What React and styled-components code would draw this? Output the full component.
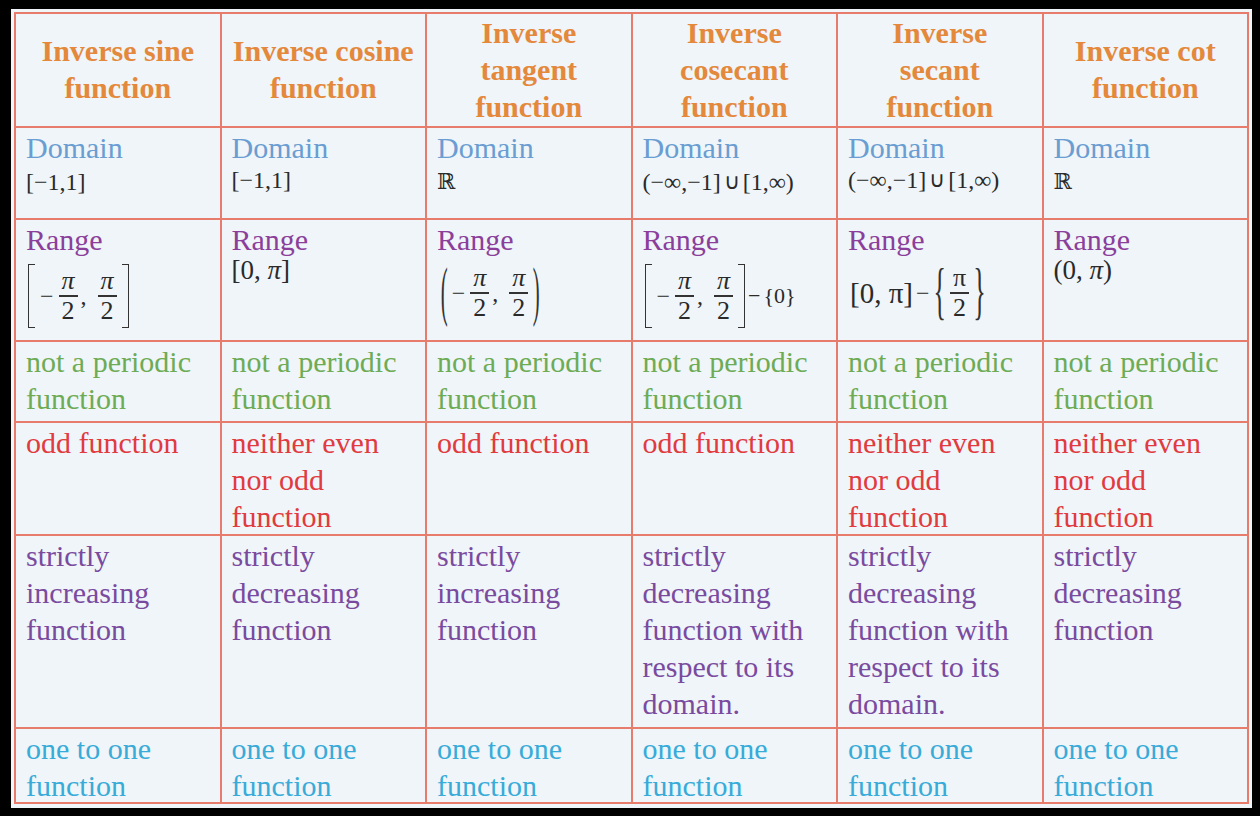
import React from "react";
import styled, { createGlobalStyle } from "styled-components";

const Global = createGlobalStyle`
  html, body { margin: 0; padding: 0; background: #000; }
  body { font-family: "Liberation Serif", "Times New Roman", serif; }
`;

const Frame = styled.div`
  width: 1260px;
  height: 816px;
  background: #000;
  padding: 9px 8px 8px 11px;
  box-sizing: border-box;
`;

const Panel = styled.div`
  width: 100%;
  height: 100%;
  background: #eff5f8;
  padding: 3px 3px 4px 3px;
  box-sizing: border-box;
`;

const Grid = styled.div`
  display: grid;
  grid-template-columns: repeat(6, 1fr);
  grid-template-rows: 114px 92px 122px 81px 113px 193px 75px;
  border-top: 2px solid #e87c6c;
  border-left: 2px solid #e87c6c;
  width: 1235px;
  box-sizing: border-box;
`;

const Cell = styled.div`
  border-right: 2px solid #e87c6c;
  border-bottom: 2px solid #e87c6c;
  padding: 1px 8px 0 10px;
  font-size: 30px;
  line-height: 37px;
  color: ${(p) => p.$color || "#222"};
  overflow: hidden;
`;

const HeadCell = styled(Cell)`
  display: flex;
  align-items: center;
  justify-content: center;
  text-align: center;
  font-weight: bold;
  color: #e4883c;
  padding: 0 6px 2px;
`;

const Line = styled.div`
  white-space: nowrap;
`;

const MathLine = styled.div`
  display: flex;
  align-items: center;
  font-size: 24px;
  line-height: 28px;
  color: #2a2a2a;
  white-space: nowrap;
  margin-top: ${(p) => p.$mt || 0}px;
  margin-left: ${(p) => p.$ml || 0}px;
`;

const Sym = styled.span`
  font-size: ${(p) => p.$size || 24}px;
  font-style: ${(p) => (p.$italic ? "italic" : "normal")};
  margin: 0 ${(p) => p.$mr ?? p.$mx ?? 0}px 0 ${(p) => p.$mx || 0}px;
  font-family: ${(p) => (p.$dj ? '"DejaVu Serif", serif' : "inherit")};
`;

const Bracket = styled.span`
  display: inline-block;
  width: 7px;
  height: ${(p) => p.$h || 60}px;
  border: 1.6px solid #333;
  ${(p) => (p.$side === "l" ? "border-right: none;" : "border-left: none;")}
  margin: ${(p) => (p.$side === "l" ? "0 3px 0 0" : "0 0 0 2px")};
  box-sizing: border-box;
`;

const Tall = styled.span`
  display: inline-block;
  font-size: 26px;
  line-height: 26px;
  transform: scale(${(p) => p.$sx || 1}, ${(p) => p.$sy || 2.3});
  margin: 0 ${(p) => p.$mx || 1}px;
  color: #333;
`;

const FracBox = styled.span`
  display: inline-flex;
  flex-direction: column;
  align-items: center;
  margin: 0 3px;
`;

const FracPart = styled.span`
  font-size: 26px;
  line-height: 28px;
  font-style: ${(p) => (p.$italic ? "italic" : "normal")};
  padding: 0 3px;
`;

const FracBar = styled.span`
  align-self: stretch;
  height: 1.5px;
  background: #333;
`;

const Frac = ({ italic = true }) => (
  <FracBox>
    <FracPart $italic={italic}>π</FracPart>
    <FracBar />
    <FracPart>2</FracPart>
  </FracBox>
);

const C = {
  domain: "#6a9dd2",
  range: "#8b3f9b",
  green: "#6eab55",
  red: "#e13a3f",
  purple: "#7a4a9f",
  cyan: "#38abd9",
};

const heads = [
  ["Inverse sine", "function"],
  ["Inverse cosine", "function"],
  ["Inverse", "tangent", "function"],
  ["Inverse", "cosecant", "function"],
  ["Inverse", "secant", "function"],
  ["Inverse cot", "function"],
];

const Label = ({ color, children }) => <Line style={{ color }}>{children}</Line>;

const Union = () => <Sym $mx={3} $size={22}>∪</Sym>;

const domains = [
  <MathLine $mt={2}>[−1,1]</MathLine>,
  <MathLine $mt={0}>[−1,1]</MathLine>,
  <MathLine $mt={2}><Sym $dj $size={22}>ℝ</Sym></MathLine>,
  <MathLine $mt={2}>(−∞,−1]<Union />[1,∞)</MathLine>,
  <MathLine $mt={0}>(−∞,−1]<Union />[1,∞)</MathLine>,
  <MathLine $mt={2}><Sym $dj $size={22}>ℝ</Sym></MathLine>,
];

const PairOfFracs = () => (
  <>
    <Sym $mx={2}>−</Sym>
    <Frac />
    <Sym $mr={8}>,</Sym>
    <Frac />
  </>
);

const ranges = [
  <MathLine $mt={6} $ml={2}>
    <Bracket $side="l" $h={64} />
    <PairOfFracs />
    <Bracket $side="r" $h={64} />
  </MathLine>,
  <MathLine $mt={-2}>
    <Sym $size={27}>[0,&nbsp;</Sym>
    <Sym $size={27} $italic>π</Sym>
    <Sym $size={27}>]</Sym>
  </MathLine>,
  <MathLine $mt={6} $ml={2}>
    <Tall $sx={0.8} $sy={2.5}>(</Tall>
    <PairOfFracs />
    <Tall $sx={0.8} $sy={2.5}>)</Tall>
  </MathLine>,
  <MathLine $mt={6} $ml={2}>
    <Bracket $side="l" $h={64} />
    <PairOfFracs />
    <Bracket $side="r" $h={64} />
    <Sym $size={22} $mx={3}>−</Sym>
    <Sym $size={22}>{"{0}"}</Sym>
  </MathLine>,
  <MathLine $mt={6} $ml={2}>
    <Sym $size={29}>[0,&nbsp;π]</Sym>
    <Sym $mx={3}>−</Sym>
    <Tall $sy={2.4}>{"{"}</Tall>
    <Frac italic={false} />
    <Tall $sy={2.4}>{"}"}</Tall>
  </MathLine>,
  <MathLine $mt={-2}>
    <Sym $size={27}>(0,&nbsp;</Sym>
    <Sym $size={27} $italic>π</Sym>
    <Sym $size={27}>)</Sym>
  </MathLine>,
];

const periodic = Array(6).fill(["not a periodic", "function"]);
const parity = [
  ["odd function"],
  ["neither even", "nor odd", "function"],
  ["odd function"],
  ["odd function"],
  ["neither even", "nor odd", "function"],
  ["neither even", "nor odd", "function"],
];
const mono = [
  ["strictly", "increasing", "function"],
  ["strictly", "decreasing", "function"],
  ["strictly", "increasing", "function"],
  ["strictly", "decreasing", "function with", "respect to its", "domain."],
  ["strictly", "decreasing", "function with", "respect to its", "domain."],
  ["strictly", "decreasing", "function"],
];
const oneToOne = Array(6).fill(["one to one", "function"]);

const TextCell = ({ lines, color }) => (
  <Cell $color={color}>
    {lines.map((l, i) => (
      <Line key={i}>{l}</Line>
    ))}
  </Cell>
);

export default function App() {
  return (
    <>
      <Global />
      <Frame>
        <Panel>
          <Grid>
            {heads.map((h, i) => (
              <HeadCell key={"h" + i}>
                <div>
                  {h.map((l, j) => (
                    <Line key={j}>{l}</Line>
                  ))}
                </div>
              </HeadCell>
            ))}
            {domains.map((d, i) => (
              <Cell key={"d" + i}>
                <Label color={C.domain}>Domain</Label>
                {d}
              </Cell>
            ))}
            {ranges.map((r, i) => (
              <Cell key={"r" + i}>
                <Label color={C.range}>Range</Label>
                {r}
              </Cell>
            ))}
            {periodic.map((l, i) => (
              <TextCell key={"p" + i} lines={l} color={C.green} />
            ))}
            {parity.map((l, i) => (
              <TextCell key={"o" + i} lines={l} color={C.red} />
            ))}
            {mono.map((l, i) => (
              <TextCell key={"m" + i} lines={l} color={C.purple} />
            ))}
            {oneToOne.map((l, i) => (
              <TextCell key={"c" + i} lines={l} color={C.cyan} />
            ))}
          </Grid>
        </Panel>
      </Frame>
    </>
  );
}
